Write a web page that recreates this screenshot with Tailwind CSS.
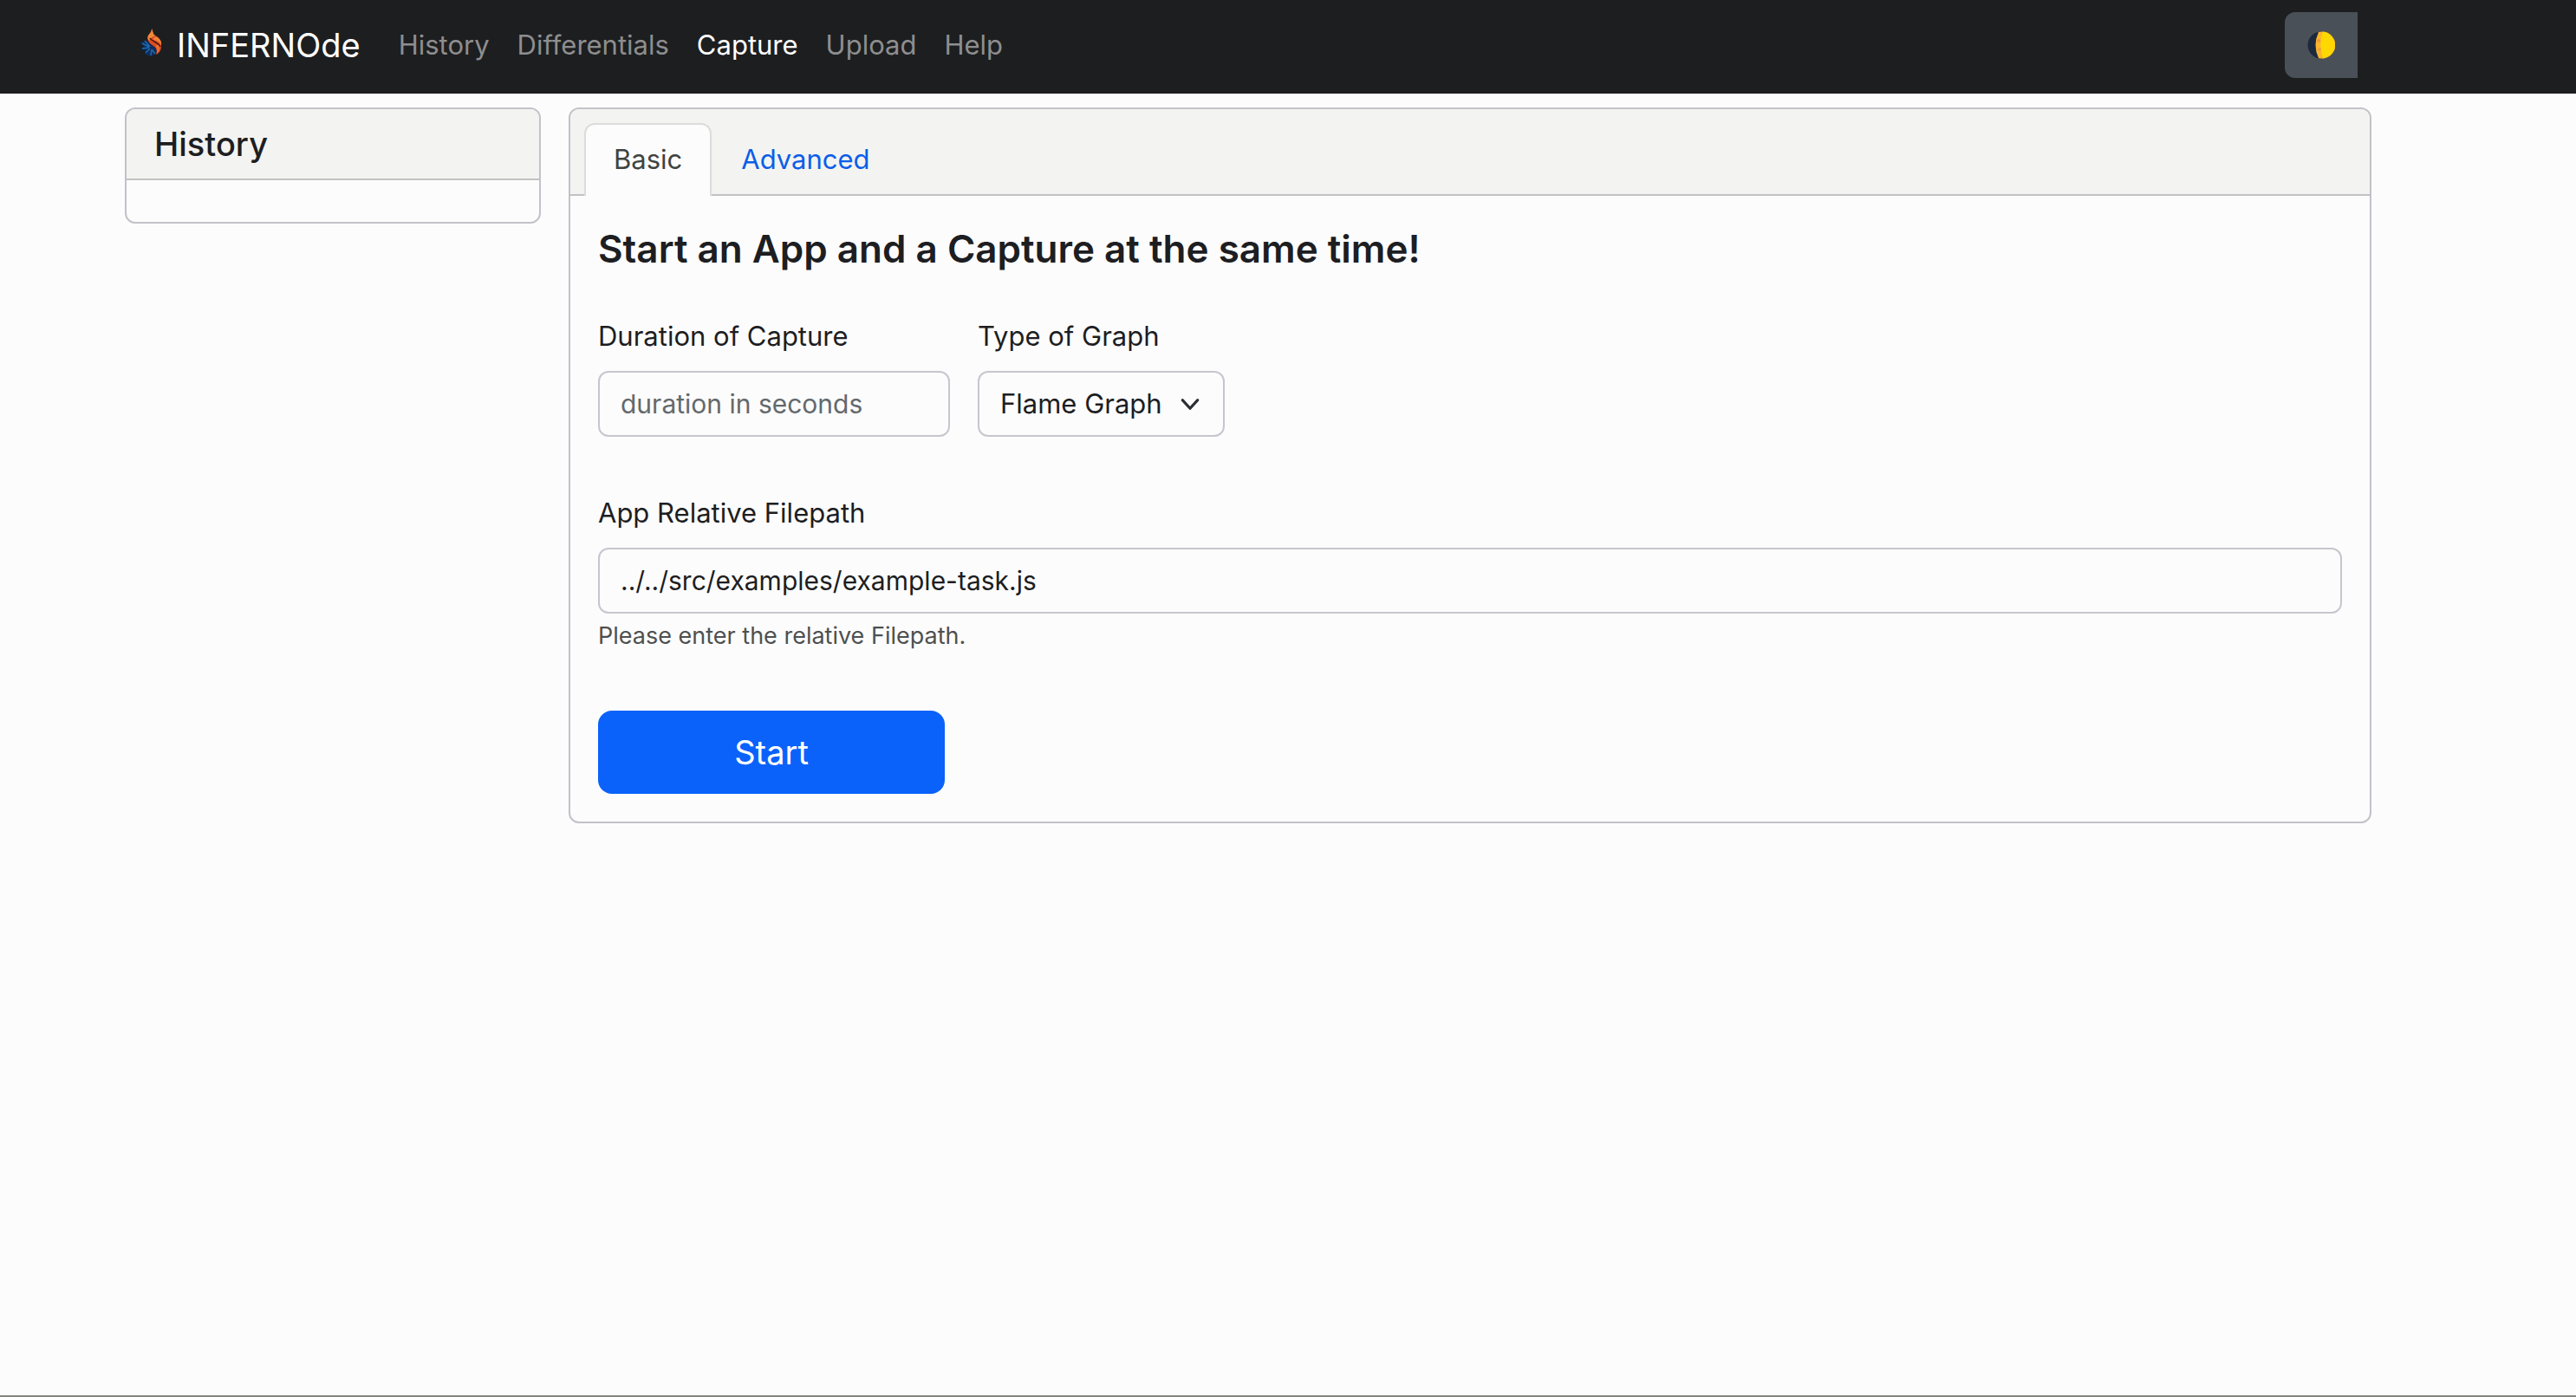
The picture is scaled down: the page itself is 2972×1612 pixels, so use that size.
<!DOCTYPE html>
<html lang="en">
<head>
<meta charset="utf-8">
<meta name="viewport" content="width=device-width, initial-scale=1">
<title>INFERNOde</title>
<script src="https://cdn.jsdelivr.net/npm/@tailwindcss/browser@4"></script>
</head>
<body class="flex min-h-screen flex-col border-b-2 border-[#85857f] bg-[#fcfcfd] font-['Inter',sans-serif] text-[31px] leading-[48px] text-[#1d1e22]">
  <header class="bg-[#1d1e20]">
    <nav class="flex items-center pt-[14px] pr-[252px] pb-[18px] pl-40" aria-label="Main">
      <a href="#" class="flex items-center text-[38px] text-white">
        <svg class="mt-[-6px] mr-4 h-8 w-7" viewBox="0 0 28 32" aria-hidden="true">
          <path d="M6 14 L12 15 L19 22 L23 27 L19 30 L13 32 L7 29 L8 25 L3 24 L6 20 L2 17 Z" fill="#102c5c"/>
          <path d="M4 17 L12 21 M4 23 L12 22 M8 28 L13 23 M14 31 L15 24 M19 29 L15 24 M7 14 L13 21" stroke="#1a6cae" stroke-width="1.500" fill="none"/>
          <path d="M15 0 C17 4 16 6 19 8 C23 10 27 14 26 20 C26 25 24 28 20 30 C22 25 20 22 17 20 C12 17 9 13 11 8 C13 5 15 4 15 0Z" fill="#df4a22"/>
          <path d="M15 0 C17 4 16 6 19 8 C17 10 14 9 12 14 C10 12 10 10 11 8 C13 5 15 4 15 0Z" fill="#ec8a3a"/>
          <path d="M20 9 C24 11 27 15 26 19 C24 15 20 14 16 12Z" fill="#f08138"/>
          <path d="M13 11 C15 15 22 15 25 21" stroke="#3d1512" stroke-width="1.500" fill="none"/>
          <path d="M23 19 C25 23 23 27 21 29 C22 25 22 22 19 20Z" fill="#e9752f"/>
        </svg>
        INFERNOde
      </a>
      <ul class="ml-11 flex flex-1 items-center gap-8 text-[#8e8e8f]">
        <li><a href="#">History</a></li>
        <li><a href="#">Differentials</a></li>
        <li><a href="#" class="text-white" aria-current="page">Capture</a></li>
        <li><a href="#">Upload</a></li>
        <li><a href="#">Help</a></li>
      </ul>
      <button type="button" aria-label="Toggle theme" class="flex h-[76px] w-[84px] items-center justify-center rounded-l-xl bg-[#4a5057]">
        <svg class="size-8" viewBox="0 0 32 32" aria-hidden="true">
          <circle cx="16" cy="16" r="15.500" fill="#1d2a3e"/>
          <path d="M13 1 A15.500 15.500 0 1 1 13 31 Q6 16 13 1Z" fill="#fbb52c"/>
          <path d="M18 .6 A15.500 15.500 0 0 1 18 31.400 Q13 16 18 .6Z" fill="#ffd800"/>
          <circle cx="13" cy="11" r="2" fill="#e8973a"/>
          <circle cx="14" cy="21" r="2" fill="#e8a040"/>
        </svg>
      </button>
    </nav>
  </header>

  <main class="flex items-start gap-8 pt-4 pr-[236px] pl-36">
    <aside class="w-[480px] shrink-0 overflow-hidden rounded-xl border-2 border-[#c2c2c9]">
      <h2 class="border-b-2 border-[#c2c2c3] bg-[#f3f3f1] px-8 py-4 text-[38px] font-medium">History</h2>
      <div class="p-6"></div>
    </aside>

    <section class="min-w-0 flex-1 rounded-xl border-2 border-[#c2c2c9]">
      <div role="tablist" class="flex rounded-t-[10px] border-b-2 border-[#c2c2c3] bg-[#f3f3f1] px-4 pt-4">
        <button type="button" role="tab" aria-selected="true" class="mb-[-2px] rounded-t-xl border-2 border-b-0 border-[#dcdcd8] bg-[#fcfcfd] px-8 pt-4 pb-[18px] text-[#40443f]">Basic</button>
        <button type="button" role="tab" aria-selected="false" class="mb-[-2px] border-2 border-b-0 border-transparent px-8 pt-4 pb-[18px] text-[#0c5ee8]">Advanced</button>
      </div>
      <form class="p-8">
        <h1 class="mb-12 text-[44px] leading-[58px] font-semibold">Start an App and a Capture at the same time!</h1>
        <div class="mb-16 flex gap-8">
          <div class="w-[406px]">
            <label for="duration" class="mb-4 block">Duration of Capture</label>
            <input id="duration" type="text" placeholder="duration in seconds" class="block h-[76px] w-full rounded-xl border-2 border-[#c6c7ce] px-6 text-[30px] placeholder:text-[#63696c]">
          </div>
          <div>
            <label for="graph" class="mb-4 block">Type of Graph</label>
            <div class="relative">
              <select id="graph" class="block h-[76px] w-[285px] appearance-none rounded-xl border-2 border-[#c6c7ce] pr-16 pl-6">
                <option>Flame Graph</option>
              </select>
              <svg class="pointer-events-none absolute top-6 right-[26px] size-7" viewBox="0 0 16 16" fill="none" stroke="#2b2f33" stroke-width="1.800" stroke-linecap="round" stroke-linejoin="round" aria-hidden="true"><path d="m3 5.500 5 5.500 5-5.500"/></svg>
            </div>
          </div>
        </div>
        <label for="filepath" class="mb-4 block">App Relative Filepath</label>
        <input id="filepath" type="text" value="../../src/examples/example-task.js" class="block h-[76px] w-full rounded-xl border-2 border-[#c6c7ce] px-6 text-[30px]">
        <p class="mt-1 mb-16 text-[27px] leading-[44px] text-[#4e504f]">Please enter the relative Filepath.</p>
        <button type="submit" class="block h-24 w-[400px] rounded-2xl bg-[#0b62fb] text-[38px] text-white">Start</button>
      </form>
    </section>
  </main>
</body>
</html>
